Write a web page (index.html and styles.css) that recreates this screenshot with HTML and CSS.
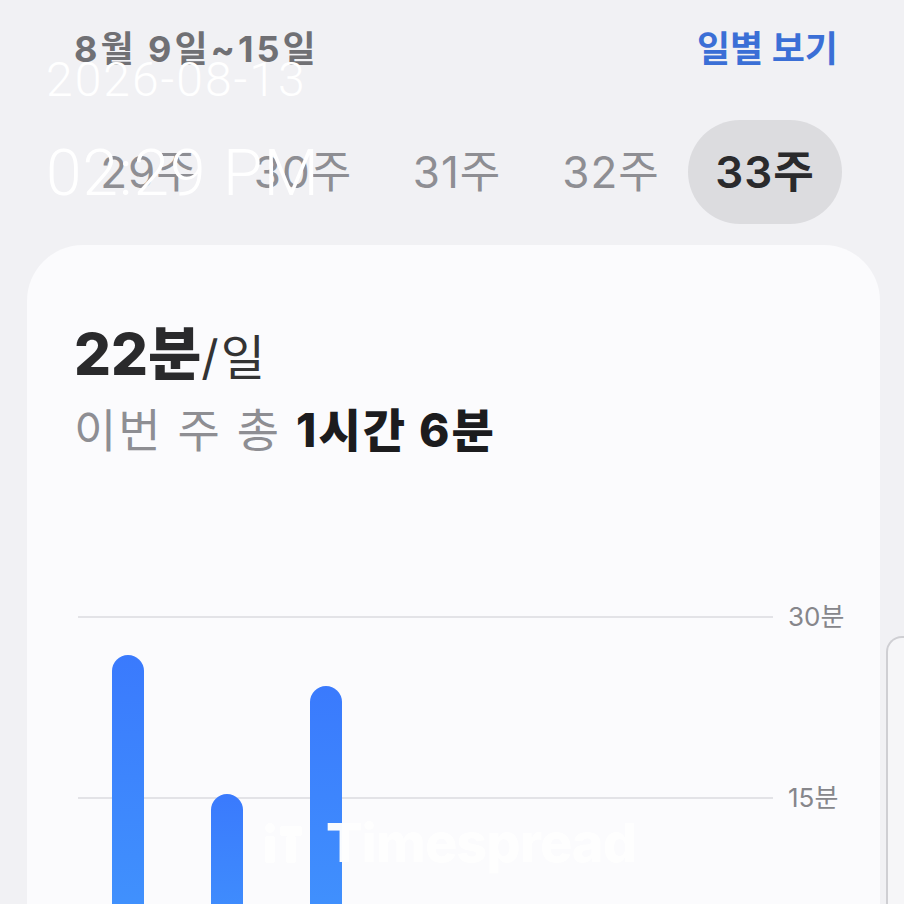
FILE: index.html
```html
<!DOCTYPE html>
<html lang="ko">
<head>
    <meta charset="UTF-8">
    <title>주간 사용 시간</title>
    <link rel="stylesheet" href="styles.css">
</head>
<body>
<div class="screen">
    <!--기간 헤더-->
    <div class="head">
        <span class="range">8월 9일~15일</span>
        <span class="daily">일별 보기</span>
    </div>
    <!--주 선택-->
    <div class="weeks">
        <span class="week">29주</span>
        <span class="week">30주</span>
        <span class="week">31주</span>
        <span class="week">32주</span>
        <span class="week current">33주</span>
    </div>
    <!--카드-->
    <div class="card">
        <div class="avg"><b>22분</b>/일</div>
        <div class="total">이번 주 총 <b>1시간 6분</b></div>
        <div class="chart">
            <div class="plot">
                <div class="lines">
                    <div class="gl"></div>
                    <div class="gl"></div>
                </div>
                <div class="bars">
                    <div class="bar" style="height: 323px"></div>
                    <div class="bar" style="height: 184px"></div>
                    <div class="bar" style="height: 292px"></div>
                    <div></div>
                    <div></div>
                    <div></div>
                    <div></div>
                </div>
            </div>
            <div class="axis">
                <div class="tick">30분</div>
                <div class="tick">15분</div>
            </div>
        </div>
    </div>
    <div class="peek"></div>
    <!--타임스탬프-->
    <div class="stamp date">2026-08-13</div>
    <div class="stamp time">02:29 PM</div>
    <!--워터마크-->
    <div class="mark">
        <svg width="42" height="40" viewBox="0 0 42 40">
            <circle cx="8" cy="5" r="5" fill="#fff"/>
            <rect x="3" y="13" width="10" height="27" rx="2" fill="#fff"/>
            <rect x="18" y="3" width="22" height="10" rx="2" fill="#fff"/>
            <rect x="24" y="13" width="10" height="27" rx="2" fill="#fff"/>
        </svg>
        <span>Timespread</span>
    </div>
</div>
</body>
</html>
```

FILE: styles.css
```css
* {
    padding: 0;
    margin: 0;
    box-sizing: border-box;
}
body {
    background-color: #f1f1f4;
    font-family: Inter, "Noto Sans CJK KR", sans-serif;
}
.screen {
    position: relative;
    width: 904px;
    height: 904px;
    overflow: hidden;
}
.head {
    display: flex;
    justify-content: space-between;
    align-items: center;
    height: 92px;
    padding: 0 66px 0 74px;
    font-size: 36px;
    font-weight: 700;
}
.range {
    color: #707074;
    letter-spacing: 3px;
}
.daily {
    color: #3b6fd6;
}
.weeks {
    display: flex;
    justify-content: flex-end;
    padding: 28px 62px 0 0;
}
.week {
    width: 154px;
    height: 104px;
    line-height: 104px;
    text-align: center;
    font-size: 44px;
    letter-spacing: 1px;
    color: #8e8e93;
}
.current {
    border-radius: 52px;
    background-color: #dcdcdf;
    color: #2a2a2c;
    font-weight: 600;
}
.card {
    margin: 21px 24px 0 27px;
    height: 700px;
    padding: 75px 0 0 47px;
    border-radius: 56px 56px 0 0;
    background-color: #fbfbfd;
}
.avg {
    font-size: 48px;
    line-height: 68px;
    letter-spacing: 2px;
    color: #333;
}
.avg b {
    font-size: 58px;
    font-weight: 800;
    letter-spacing: 0;
    color: #2a2a2c;
}
.total {
    margin-top: 10px;
    font-size: 46px;
    line-height: 56px;
    letter-spacing: 2px;
    color: #8e8e93;
}
.total b {
    font-weight: 800;
    color: #1c1c1e;
}
.chart {
    display: flex;
    margin: 158px 0 0 4px;
}
.plot {
    display: grid;
    width: 695px;
}
.plot > div {
    grid-area: 1 / 1;
}
.lines .gl {
    height: 181px;
    border-top: 2px solid #e3e3e7;
}
.bars {
    display: grid;
    grid-template-columns: repeat(7, 1fr);
    align-items: end;
    justify-items: center;
}
.bar {
    width: 32px;
    border-radius: 16px 16px 0 0;
    background: linear-gradient(#3a7afd, #4297fd);
}
.axis {
    padding-left: 15px;
}
.tick {
    height: 181px;
    line-height: 2px;
    font-size: 26px;
    color: #86868b;
}
.peek {
    position: absolute;
    left: 886px;
    top: 636px;
    width: 60px;
    height: 300px;
    border: 2px solid #cfcfd3;
    border-right: none;
    border-radius: 16px 0 0 0;
    background-color: #f6f6f8;
}
.stamp {
    position: absolute;
    left: 46px;
    font-family: Roboto, sans-serif;
    font-weight: 300;
    color: #fff;
    white-space: nowrap;
}
.date {
    top: 51px;
    font-size: 48px;
    letter-spacing: 2px;
}
.time {
    top: 136px;
    font-size: 64px;
    letter-spacing: 1px;
}
.mark {
    position: absolute;
    left: 262px;
    top: 810px;
    display: flex;
    align-items: center;
    gap: 22px;
    color: #fff;
    font-family: Inter, sans-serif;
    font-size: 54px;
    font-weight: 800;
    letter-spacing: -1px;
    opacity: 0.97;
}
```
